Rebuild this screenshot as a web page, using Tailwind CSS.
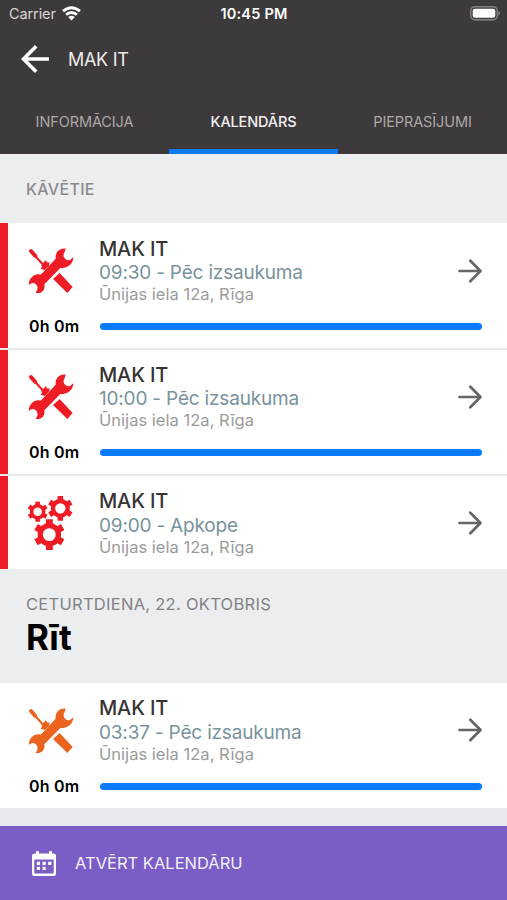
<!DOCTYPE html>
<html lang="lv">
<head>
<meta charset="utf-8">
<meta name="viewport" content="width=device-width, initial-scale=1">
<title>MAK IT</title>
<script src="https://cdn.jsdelivr.net/npm/@tailwindcss/browser@4"></script>
</head>
<body class="w-[507px] h-[900px] overflow-hidden bg-[#e9e8ee] font-['Inter',sans-serif] whitespace-nowrap">
<svg class="hidden">
  <symbol id="tools" viewBox="21 36 144 144">
    <path fill="currentColor" d="M137 41C119 39 105 51 107 71L62 119C44 114 27 128 26 149L36 144Q46 142 51 152Q56 162 47 173C62 179 77 165 73 148L121 99C140 102 160 88 160 67L151 74Q141 79 134 70Q127 61 134 51Z"/>
    <path fill="currentColor" d="M119 114L158 156L142 174L99 132Z"/>
    <path fill="none" stroke="currentColor" stroke-linecap="round" stroke-width="12" d="M33 48L46 63"/>
    <path fill="none" stroke="currentColor" stroke-width="6" d="M43 60L70 90"/>
    <path fill="currentColor" d="M77 76L83 83L89 82L87 92L74 105L62 101L66 95L64 90Z"/>
  </symbol>
  <symbol id="gear" viewBox="-50 -50 100 100">
    <circle r="29" fill="none" stroke="currentColor" stroke-width="17"/>
    <path fill="none" stroke="currentColor" stroke-width="22" d="M0-30V-49M0 30V49M26-15L42.400-24.500M26 15L42.400 24.500M-26-15L-42.400-24.500M-26 15L-42.400 24.500"/>
  </symbol>
  <symbol id="arrow" viewBox="0 0 24 24">
    <path fill="none" stroke="currentColor" stroke-width="2.7" stroke-linecap="round" stroke-linejoin="round" d="M1.5 12H22.3M12.3 1.8L22.5 12L12.3 22.2"/>
  </symbol>
</svg>

<header class="h-[154px] bg-[#3e393a] text-white flex flex-col">
  <div class="h-7 grid grid-cols-3 items-center pl-[9px] pr-[7px]">
    <div class="flex items-center gap-[6px] text-[#d6d5d5]">
      <span class="text-[14.5px] leading-5 tracking-[-0.1px]">Carrier</span>
      <svg class="w-[19px] h-[15px] -mt-[2px]" viewBox="0 0 19 15" fill="none" stroke="#fff" stroke-width="2.8"><path d="M1 5.2Q9.5-1.8 18 5.2M4.1 8.7Q9.5 4.2 14.9 8.7"/><path fill="#fff" stroke="none" d="M6.2 11Q9.5 8.4 12.800 11L9.5 14.4Z"/></svg>
    </div>
    <span class="justify-self-center text-[14.5px] leading-5 font-semibold tracking-[0.2px] -ml-px">10:45 PM</span>
    <svg class="justify-self-end w-[30px] h-[15px] -mt-[2px]" viewBox="0 0 30 15"><rect x=".8" y=".8" width="26.4" height="12.9" rx="3.8" fill="none" stroke="#858283" stroke-width="1.4"/><rect x="2.7" y="2.7" width="22.6" height="9.1" rx="2" fill="#fff"/><path fill="#858283" d="M28.4 5Q30 6 30 7.3T28.4 9.7Z"/></svg>
  </div>
  <div class="h-[62px] flex items-center pl-[21px] gap-[19px]">
    <svg class="w-7 h-7" viewBox="0 0 28 28" fill="none" stroke="#fff" stroke-width="3.6"><path d="M28 14H2.5M15.2 1.3L2.5 14L15.2 26.7"/></svg>
    <h1 class="pt-px text-[18px] leading-6 tracking-[-0.3px] text-[#ececec]">MAK IT</h1>
  </div>
  <nav class="h-16 grid grid-cols-3 text-center text-[14.5px] leading-[63px] text-[#aaa8a8]">
    <a class="h-16 tracking-[-0.1px]">INFORMĀCIJA</a>
    <a class="h-16 border-b-5 border-[#0a7af5] text-[#f0f0f0] font-medium tracking-[-0.15px]">KALENDĀRS</a>
    <a class="h-16 tracking-[-0.1px]">PIEPRASĪJUMI</a>
  </nav>
</header>

<main>
  <section class="h-[69px] bg-[#ecedef] pl-[26px] flex items-center">
    <h2 class="text-[16px] leading-5 tracking-[0.3px] font-medium text-[#8b8b8e]">KĀVĒTIE</h2>
  </section>

  <article class="h-[127px] bg-white border-b-2 border-[#e9e9eb] flex">
    <div class="w-2 bg-[#ee1c25]"></div>
    <div class="flex-1 pl-[19px] pr-[25px] pt-[13px]">
      <div class="flex h-[78px]">
        <svg class="w-12 h-12 mt-[11px] text-[#ee1c25]"><use href="#tools"/></svg>
        <div class="ml-[24px] pt-px flex-1">
          <h3 class="text-[20px] leading-6 font-medium tracking-[-0.15px] text-[#363333]">MAK IT</h3>
          <p class="text-[19px] leading-6 tracking-[-0.19px] text-[#78939a]">09:30 - Pēc izsaukuma</p>
          <p class="text-[16.5px] leading-[18px] tracking-[0.03px] text-[#9b9b9b]">Ūnijas iela 12a, Rīga</p>
        </div>
        <svg class="w-6 h-6 mt-[23px] text-[#666]"><use href="#arrow"/></svg>
      </div>
      <div class="flex items-center h-[25px]"><span class="w-[73px] pl-[2px] -mt-[2px] text-[16px] tracking-[0.2px] font-semibold text-black">0h 0m</span><div class="flex-1 h-[7px] rounded-full bg-[#0a7aff]"></div></div>
    </div>
  </article>

  <article class="h-[126px] bg-white border-b-2 border-[#e9e9eb] flex">
    <div class="w-2 bg-[#ee1c25]"></div>
    <div class="flex-1 pl-[19px] pr-[25px] pt-[12px]">
      <div class="flex h-[78px]">
        <svg class="w-12 h-12 mt-[11px] text-[#ee1c25]"><use href="#tools"/></svg>
        <div class="ml-[24px] pt-px flex-1">
          <h3 class="text-[20px] leading-6 font-medium tracking-[-0.15px] text-[#363333]">MAK IT</h3>
          <p class="text-[19px] leading-6 tracking-[-0.19px] text-[#78939a]">10:00 - Pēc izsaukuma</p>
          <p class="text-[16.5px] leading-[18px] tracking-[0.03px] text-[#9b9b9b]">Ūnijas iela 12a, Rīga</p>
        </div>
        <svg class="w-6 h-6 mt-[23px] text-[#666]"><use href="#arrow"/></svg>
      </div>
      <div class="flex items-center h-[25px]"><span class="w-[73px] pl-[2px] -mt-[2px] text-[16px] tracking-[0.2px] font-semibold text-black">0h 0m</span><div class="flex-1 h-[7px] rounded-full bg-[#0a7aff]"></div></div>
    </div>
  </article>

  <article class="h-[93px] bg-white flex">
    <div class="w-2 bg-[#ee1c25]"></div>
    <div class="flex-1 pl-[19px] pr-[25px] pt-[13px] flex">
      <svg class="w-12 h-[56px] mt-[6px] text-[#ee1c25]" viewBox="21 21 144 168"><use href="#gear" x="22" y="40" width="62" height="62"/><use href="#gear" x="83" y="23" width="76" height="76"/><use href="#gear" x="41" y="93" width="94" height="94"/></svg>
      <div class="ml-[24px] flex-1">
        <h3 class="text-[20px] leading-6 font-medium tracking-[-0.15px] text-[#363333]">MAK IT</h3>
        <p class="pt-px text-[19px] leading-6 tracking-[-0.19px] text-[#78939a]">09:00 - Apkope</p>
        <p class="text-[16.5px] leading-[18px] tracking-[0.03px] text-[#9b9b9b]">Ūnijas iela 12a, Rīga</p>
      </div>
      <svg class="w-6 h-6 mt-[22px] text-[#666]"><use href="#arrow"/></svg>
    </div>
  </article>

  <section class="h-[114px] bg-[#ecedef] pl-[26px] pt-[25px]">
    <p class="text-[16.5px] leading-5 tracking-[0.28px] text-[#828285]">CETURTDIENA, 22. OKTOBRIS</p>
    <h2 class="text-[35px] leading-[46px] tracking-[-1.4px] font-bold text-black">Rīt</h2>
  </section>

  <article class="h-[125px] bg-white flex">
    <div class="flex-1 pl-[27px] pr-[25px] pt-[13px]">
      <div class="flex h-[78px]">
        <svg class="w-12 h-12 mt-[11px] text-[#ea6420]"><use href="#tools"/></svg>
        <div class="ml-[24px] flex-1">
          <h3 class="text-[20px] leading-6 font-medium tracking-[-0.15px] text-[#363333]">MAK IT</h3>
          <p class="pt-px text-[19px] leading-6 tracking-[-0.19px] text-[#78939a]">03:37 - Pēc izsaukuma</p>
          <p class="text-[16.5px] leading-[18px] tracking-[0.03px] text-[#9b9b9b]">Ūnijas iela 12a, Rīga</p>
        </div>
        <svg class="w-6 h-6 mt-[22px] text-[#666]"><use href="#arrow"/></svg>
      </div>
      <div class="flex items-center h-[25px]"><span class="w-[73px] pl-[2px] -mt-[2px] text-[16px] tracking-[0.2px] font-semibold text-black">0h 0m</span><div class="flex-1 h-[7px] rounded-full bg-[#0a7aff]"></div></div>
    </div>
  </article>
</main>

<footer class="mt-[18px] h-[74px] bg-[#7a5dc5] text-[#f4f0fb] flex items-center pl-8">
  <svg class="w-6 h-[26px] mt-[2px]" viewBox="0 0 24 26"><path fill="#fff" fill-rule="evenodd" d="M3 2.500H4V1Q4 0 5 0H6Q7 0 7 1V2.500H17V1Q17 0 18 0H19Q20 0 20 1V2.500H21.500Q24 2.500 24 5V22.500Q24 25 21.500 25H2.500Q0 25 0 22.500V5Q0 2.500 3 2.500ZM2.300 8.500V21.500Q2.300 22.500 3.300 22.500H20.700Q21.700 22.500 21.700 21.500V8.500Z"/><path fill="#fff" d="M4.800 10.700h3.200v3.200h-3.200zM10.500 10.700h3.200v3.200h-3.200zM16.200 10.700h3.200v3.200h-3.200zM4.800 15.800h3.200v3.200h-3.200zM10.500 15.800h3.200v3.200h-3.200z"/></svg>
  <span class="ml-[19px] text-[16.500px] leading-6">ATVĒRT KALENDĀRU</span>
</footer>
</body>
</html>
